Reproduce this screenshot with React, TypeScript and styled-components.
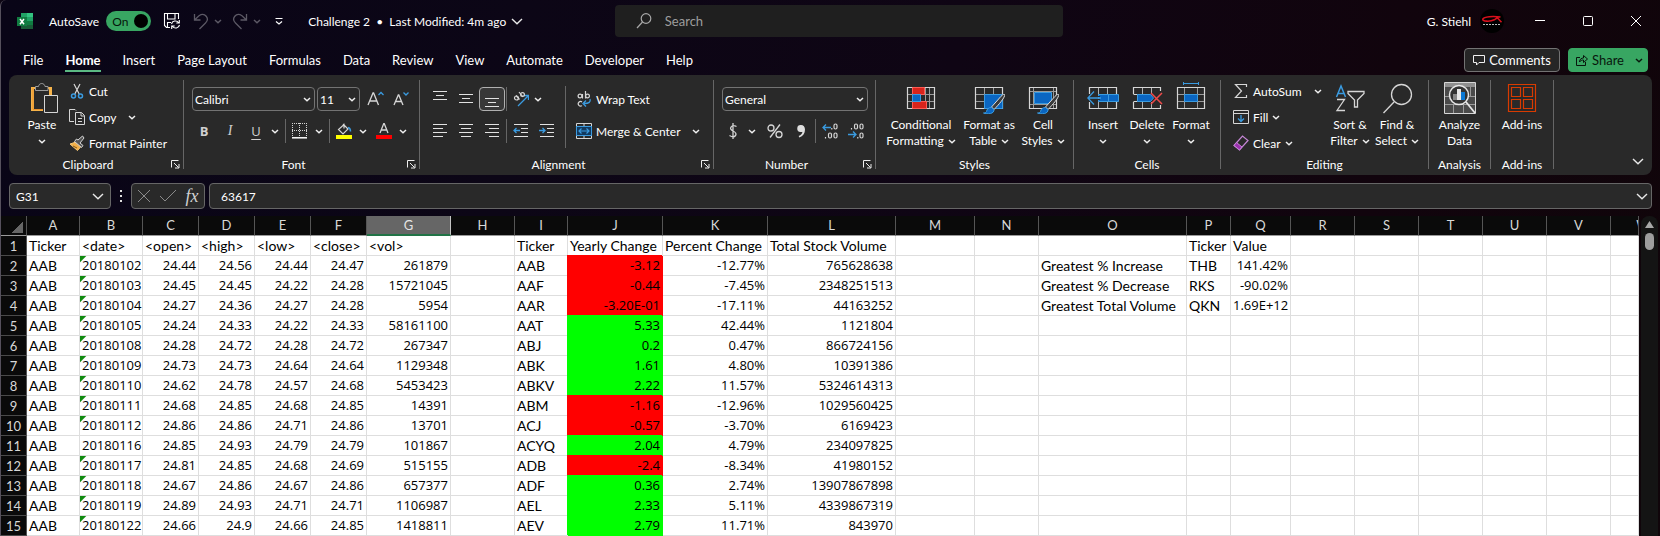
import React from 'react';
import styled, { createGlobalStyle, css } from 'styled-components';

const ink = '#ffffff';
const line = '#d6d6d6';
const blue = '#0a66c2';
const sky = '#3a9be0';
const green = '#38a662';

const Global = createGlobalStyle`
  * { box-sizing: border-box; }
  body { margin: 0; background: #0d0614; overflow-x: hidden; }
  body, button, input, select { font-family: Lato, "Open Sans", sans-serif; font-size: 12px; color: ${ink}; }
  button, input, select { margin: 0; padding: 0; border: 0; background: none; outline: none; }
  svg { display: block; flex: none; }
`;

const Window = styled.div`
  height: 100vh;
  overflow: hidden;
  display: flex;
  flex-direction: column;
  border-left: 1px solid #55505c;
  border-top-left-radius: 6px;
  background: linear-gradient(100deg, #090517 0%, #0c0616 30%, #0f0514 55%, #11040d 80%, #10050a 100%);
`;

/* ---------- Title bar ---------- */
const TitleBar = styled.header`
  display: grid;
  grid-template-columns: 37% 27% 1fr;
  align-items: center;
  height: 42px;
`;
const TitleLeft = styled.div`
  display: flex;
  align-items: center;
  padding-left: 16px;
  white-space: nowrap;
`;
const AutoSave = styled.label`
  display: flex;
  align-items: center;
  gap: 7px;
  margin: 0 12px 0 16px;
`;
const Switch = styled.span`
  display: flex;
  align-items: center;
  justify-content: space-between;
  width: 45px;
  height: 20px;
  padding: 0 3px 0 6px;
  border-radius: 10px;
  background: ${green};
  color: #06140b;
`;
const Knob = styled.span`
  width: 14px;
  height: 14px;
  border-radius: 50%;
  background: #000;
`;
const HiddenCheck = styled.input`
  position: absolute;
  opacity: 0;
  width: 1px;
  height: 1px;
`;
const QuickButton = styled.button<{ $w: number; $ml?: number }>`
  display: flex;
  justify-content: center;
  align-items: center;
  width: ${p => p.$w}px;
  height: 24px;
  margin-left: ${p => p.$ml ?? 0}px;
`;
const DocName = styled.button`
  display: flex;
  align-items: center;
  gap: 5px;
  margin-left: 23px;
  white-space: pre;
`;
const SearchBox = styled.label`
  display: flex;
  align-items: center;
  gap: 13px;
  height: 32px;
  padding-left: 21px;
  border-radius: 4px;
  background: #1f1f1f;
`;
const SearchInput = styled.input`
  flex: 1;
  font-size: 13px;
  &::placeholder { color: #9d9d9d; opacity: 1; }
`;
const TitleRight = styled.div`
  display: flex;
  align-items: center;
  justify-content: flex-end;
`;
const Avatar = styled.span`
  width: 24px;
  height: 24px;
  margin: 0 12px 0 9px;
  border-radius: 50%;
  background: #000;
`;
const WindowButton = styled.button`
  display: flex;
  align-items: center;
  justify-content: center;
  width: 48px;
  height: 32px;
`;

/* ---------- Tabs ---------- */
const TabRow = styled.div`
  display: flex;
  align-items: center;
  justify-content: space-between;
  height: 33px;
  padding: 6px 12px 3px 22px;
`;
const Tabs = styled.nav`
  display: flex;
  gap: 22px;
`;
const Tab = styled.button<{ $active?: boolean }>`
  height: 24px;
  font-size: 13px;
  padding-top: 2px;
  font-weight: ${p => (p.$active ? 700 : 400)};
  border-bottom: 2px solid ${p => (p.$active ? '#5bb983' : 'transparent')};
`;
const TabActions = styled.div`
  display: flex;
  gap: 8px;
`;
const CommentsButton = styled.button`
  display: flex;
  align-items: center;
  justify-content: center;
  gap: 4px;
  width: 96px;
  height: 24px;
  font-size: 13px;
  border: 1px solid #737373;
  border-radius: 4px;
  background: #262626;
`;
const ShareButton = styled(CommentsButton)`
  justify-content: flex-start;
  width: 80px;
  padding: 0 4px 0 7px;
  border-color: ${green};
  background: ${green};
  color: #08170d;
`;
const ShareText = styled.span`
  flex: 1;
  text-align: left;
`;

/* ---------- Ribbon ---------- */
const Ribbon = styled.section`
  display: flex;
  height: 100px;
  margin: 0 8px;
  border-radius: 8px;
  background: #292929;
`;
const Divider = styled.span<{ $m?: string }>`
  flex: none;
  width: 1px;
  margin: ${p => p.$m ?? '0 1px'};
  background: #666;
`;
const Group = styled.section<{ $w: number }>`
  display: flex;
  flex-direction: column;
  flex: none;
  width: ${p => p.$w}px;
  padding-top: 4px;
`;
const GroupBody = styled.div<{ $pl?: number }>`
  display: flex;
  height: 78px;
  padding-left: ${p => p.$pl ?? 0}px;
`;
const GroupFooter = styled.footer`
  display: flex;
  align-items: center;
  height: 15px;
  text-align: center;
`;
const GroupName = styled.span`
  flex: 1;
`;
const Launcher = styled.button`
  display: flex;
  justify-content: center;
  width: 16px;
`;
const BigButton = styled.button<{ $w: number }>`
  display: flex;
  flex-direction: column;
  align-items: center;
  flex: none;
  width: ${p => p.$w}px;
  height: 78px;
  padding-top: 3px;
  line-height: 16px;
  white-space: nowrap;
`;
const BigText = styled.span`
  margin-top: 3px;
`;
const BigLine = styled.span`
  display: flex;
  align-items: center;
  gap: 4px;
  height: 16px;
`;
const Stack = styled.div<{ $w?: number; $pl?: number }>`
  flex: none;
  width: ${p => (p.$w ? p.$w + 'px' : 'auto')};
  padding-left: ${p => p.$pl ?? 0}px;
`;
const StackRow = styled.div<{ $gap?: number }>`
  display: flex;
  align-items: center;
  gap: ${p => p.$gap ?? 4}px;
  height: 26px;
  padding-bottom: 2px;
`;
const TextButton = styled.button`
  display: flex;
  align-items: center;
  gap: 4px;
  height: 24px;
  white-space: nowrap;
`;
const ToolRows = styled.div<{ $w?: number }>`
  display: flex;
  flex-direction: column;
  gap: 8px;
  padding-top: 8px;
  flex: none;
  width: ${p => (p.$w ? p.$w + 'px' : 'auto')};
`;
const ToolRow = styled.div<{ $pl?: number }>`
  display: flex;
  height: 24px;
  padding-left: ${p => p.$pl ?? 0}px;
`;
const glyph = css`
  font-family: "Open Sans", sans-serif;
  color: #d0d0d0;
`;
const Tool = styled.button<{ $on?: boolean; $size?: number }>`
  ${glyph}
  display: flex;
  align-items: center;
  justify-content: center;
  flex: none;
  width: 26px;
  height: 24px;
  font-size: ${p => p.$size ?? 13}px;
  ${p => p.$on && css`
    border: 1px solid #b0b0b0;
    border-radius: 4px;
    background: #383838;
  `}
`;
const Bold = styled.b`font-weight: 700;`;
const Italic = styled.i`font-family: "Liberation Serif", serif; font-size: 14px;`;
const Under = styled.u`text-underline-offset: 3px;`;
const Drop = styled.button<{ $w?: number; $mr?: number }>`
  display: flex;
  align-items: center;
  justify-content: center;
  flex: none;
  width: ${p => p.$w ?? 12}px;
  height: 24px;
  margin-right: ${p => p.$mr ?? 0}px;
`;
const SelectFrame = styled.label<{ $w: number; $mr?: number }>`
  display: flex;
  align-items: center;
  flex: none;
  width: ${p => p.$w}px;
  height: 24px;
  margin-right: ${p => p.$mr ?? 0}px;
  padding: 0 3px 0 2px;
  border: 1px solid #737373;
  border-radius: 4px;
`;
const Select = styled.select`
  flex: 1;
  min-width: 0;
  appearance: none;
`;
const RibbonEnd = styled.div`
  flex: 1;
  display: flex;
  justify-content: flex-end;
  align-items: flex-end;
  padding: 0 8px 10px 0;
`;

/* ---------- Formula bar ---------- */
const FormulaBar = styled.div`
  display: flex;
  flex: none;
  height: 26px;
  margin: 8px 8px 7px;
`;
const Frame = styled.div<{ $w?: number }>`
  display: flex;
  align-items: center;
  flex: ${p => (p.$w ? 'none' : '1')};
  width: ${p => (p.$w ? p.$w + 'px' : 'auto')};
  border: 1px solid #666;
  border-radius: 4px;
  background: #292929;
`;
const FormulaFrame = styled(Frame)`
  margin-left: 4px;
`;
const BarInput = styled.input<{ $pl: number }>`
  flex: 1;
  min-width: 0;
  padding-left: ${p => p.$pl}px;
`;
const Grip = styled.span`
  display: flex;
  align-items: center;
  justify-content: center;
  width: 20px;
`;
const FxTool = styled.button<{ $w?: number }>`
  display: flex;
  align-items: center;
  justify-content: center;
  width: ${p => p.$w ?? 24}px;
`;
const Fx = styled.i`
  font-family: "Liberation Serif", serif;
  font-size: 18px;
  line-height: 20px;
  color: #d0d0d0;
`;

/* ---------- Sheet ---------- */
const SheetArea = styled.main`
  display: flex;
  flex: 1;
  min-height: 0;
  overflow: hidden;
`;
const GridPane = styled.div`
  flex: 1;
  min-width: 0;
  overflow: hidden;
`;
const Grid = styled.table`
  width: 100%;
  table-layout: fixed;
  border-collapse: separate;
  border-spacing: 0;
  background: #fff;
`;
const Col = styled.col<{ $w?: number }>`
  width: ${p => (p.$w ? p.$w + 'px' : 'auto')};
`;
const ColHead = styled.th<{ $sel?: boolean }>`
  height: 20px;
  padding: 0 0 2px;
  overflow: hidden;
  font-size: 13px;
  font-weight: 400;
  line-height: 16px;
  color: #d8d8d8;
  background: #0a0a0a;
  border-right: 1px solid #555;
  border-bottom: 1px solid #9a9a9a;
  ${p => p.$sel && css`
    color: #e4e4e4;
    background: #666;
    padding-bottom: 1px;
    border-right-color: #c4c4c4;
    border-bottom: 2px solid #217346;
  `}
`;
const ClippedHead = styled.div`
  width: 64px;
`;
const Corner = styled(ColHead)`
  background: linear-gradient(135deg, transparent 50%, #666 50%) right 3px bottom 2px / 12px 12px no-repeat #0a0a0a;
`;
const RowHead = styled.th`
  height: 20px;
  padding: 0;
  font-size: 13px;
  font-weight: 400;
  line-height: 18px;
  color: #d8d8d8;
  background: #0a0a0a;
  border-right: 1px solid #555;
  border-bottom: 1px solid #4a4a4a;
`;
const Cell = styled.td<{ $num?: boolean; $left?: boolean; $fill?: string; $flag?: boolean }>`
  height: 20px;
  padding: 0 2px;
  overflow: hidden;
  white-space: nowrap;
  line-height: 19px;
  color: #000;
  font-family: ${p => (p.$num ? '"Open Sans", sans-serif' : 'Lato, "Open Sans", sans-serif')};
  font-size: ${p => (p.$num ? 13 : 14)}px;
  text-align: ${p => (p.$num && !p.$left ? 'right' : 'left')};
  border-right: 1px solid #dedede;
  border-bottom: 1px solid #dedede;
  ${p => p.$flag && css`
    background: linear-gradient(135deg, #0f8a0f 4px, transparent 5px);
  `}
  ${p => p.$fill && css`
    position: relative;
    background: ${p.$fill};
    border-color: ${p.$fill};
    box-shadow: -1px -1px 0 ${p.$fill};
  `}
`;
const ScrollTrack = styled.div`
  display: flex;
  flex-direction: column;
  align-items: center;
  gap: 5px;
  flex: none;
  width: 17px;
  margin: 0 2px;
  padding-top: 5px;
  border-radius: 8px 8px 0 0;
  background: #141414;
`;
const ScrollThumb = styled.span`
  width: 9px;
  height: 17px;
  border-radius: 5px;
  background: #9e9e9e;
`;

/* ---------- Icons ---------- */
const Chev = ({ c = '#f0f0f0' }: { c?: string }) => (
  <svg width="8" height="5" viewBox="0 0 8 5" fill="none" stroke={c} strokeWidth="1.5"><path d="M1 1l3 2.7L7 1" /></svg>
);
const WideChev = () => (
  <svg width="12" height="7" viewBox="0 0 12 7" fill="none" stroke="#e8e8e8" strokeWidth="1.4"><path d="M1 1l5 4.8L11 1" /></svg>
);
const Ico = ({ s = 16, w, children }: { s?: number; w?: number; children: React.ReactNode }) => (
  <svg width={w ?? s} height={s} viewBox={`0 0 ${w ?? s} ${s}`} fill="none" stroke={line} strokeWidth="1">{children}</svg>
);
const ExcelLogo = () => (
  <Ico s={16}>
    <g stroke="none">
      <path fill="#21a366" d="M4 0h6v4H4z" /><path fill="#33c481" d="M10 0h6v4h-6z" />
      <path fill="#107c41" d="M4 4h6v4H4z" /><path fill="#21a366" d="M10 4h6v4h-6z" />
      <path fill="#185c37" d="M4 8h6v8H4z" /><path fill="#107c41" d="M10 8h6v4h-6z" /><path fill="#185c37" d="M10 12h6v4h-6z" />
      <path fill="#107c41" d="M0 4h10v9H0z" />
    </g>
    <path stroke="#fff" strokeWidth="1.5" d="M3 6l4 5.2M7 6l-4 5.2" />
  </Ico>
);
const SaveIcon = () => (
  <Ico s={18}><g stroke="#fff" strokeWidth="1.1">
    <path d="M7 15.5H3.5l-2-2v-12h14V7M4.500 1.500v5.500h7.500V1.500M4.500 15v-4.500H8" />
    <path d="M8.500 12a4 4 0 0 1 7-1.500m.800-2.500v3h-3M16.500 13a4 4 0 0 1-7 1.500m-.8 2.500v-3h3" />
  </g></Ico>
);
const UndoIcon = () => <Ico s={17} w={16}><path stroke="#5c5965" strokeWidth="1.3" d="M1.500 1v6h6M1.500 7L6 2.700c6-4 11 3 6.500 7.300L6.500 16" /></Ico>;
const RedoIcon = () => <Ico s={17} w={16}><path stroke="#5c5965" strokeWidth="1.3" d="M14.500 1v6h-6M14.500 7L10 2.700C4 -1.300 -1 5.700 3.500 10L9.500 16" /></Ico>;
const Launch = () => (
  <Ico s={9}><path stroke="#eee" d="M.5 7.500V.5h7M3 3l4.500 4.500M8 4v4H4" /></Ico>
);
const PasteIcon = () => (
  <Ico s={32}>
    <path fill="#f7b44a" stroke="none" d="M5 5h6v2H8v20h9v2H5z" /><path fill="#f7b44a" stroke="none" d="M20 5h6v8h-3V7h-3z" />
    <path stroke="#e8912d" d="M7 6v21.500h10" />
    <path fill="#292929" d="M9.500 8.500v-4h3c.5-4 6-4 6.500 0h3v4z" stroke="#9c9c9c" />
    <path d="M18.500 13.500h13v17h-13z" fill="#292929" />
  </Ico>
);
const CutIcon = () => (
  <Ico><path d="M5 1l5.200 10M11 1L5.800 11" strokeWidth="1.200" /><g stroke={sky} strokeWidth="1.500"><circle cx="4.500" cy="13" r="2" /><circle cx="11.500" cy="13" r="2" /></g></Ico>
);
const CopyIcon = () => (
  <Ico><path d="M5 12.500H.5v-12H6l1 1M6.500 3.500h6l3 3v9h-9zM12 3.500V7h3.500M9 9.500h4M9 12.500h4" /></Ico>
);
const PainterIcon = () => (
  <Ico><path fill="#f2b04a" stroke="#f7c877" d="M1 9l6-2 5 4.500-3.500 4z" /><path stroke="#8a5a12" d="M4 11l4 2" /><path d="M5.500 6.500l7 6 1.500-2-3-2.500L15 3l-1.500-2-4.500 4-1.500-1z" fill="#555" /></Ico>
);
const GrowA = () => <Ico s={20}><path strokeWidth="1.300" d="M3 16L8 4h.6L13.500 16M4.800 12h7" /><path stroke={sky} strokeWidth="1.300" d="M13.500 6L16 3.500 18.500 6" /></Ico>;
const ShrinkA = () => <Ico s={20}><path strokeWidth="1.300" d="M3 16l4.300-10h.5L12 16M4.500 12.500h6" /><path stroke={sky} strokeWidth="1.300" d="M12.500 3.500L15 6l2.500-2.500" /></Ico>;
const BordersIcon = () => <Ico><path strokeDasharray="1 1" d="M0 .5h15M0 7.500h15M.5 0v14M7.500 0v14M14.500 0v14" /><path stroke="#fff" strokeWidth="1.500" d="M0 14.800h15" /></Ico>;
const FillIcon = () => <Ico><path d="M7 1l5 5-5 5-4.500-4.500L8 1.500v4" strokeWidth="1.200" /><path stroke={sky} strokeWidth="1.500" d="M12 4.500c2 .5 2.500 2 2.500 4" /><path fill="#ff0" stroke="none" d="M0 12h16v4H0z" /></Ico>;
const FontColorIcon = () => <Ico><path strokeWidth="1.300" d="M4 10L8 0l4 10M5.300 7h5.400" /><path fill="#f00" stroke="none" d="M0 12h16v4H0z" /></Ico>;
const Lines = ({ rows }: { rows: [number, number, number][] }) => (
  <Ico><g stroke="#e2e2e2">{rows.map(([y, a, b]) => <path key={y} d={`M${a} ${y + 0.5}H${b}`} />)}</g></Ico>
);
const OrientIcon = () => (
  <Ico><path stroke={sky} strokeWidth="1.300" d="M5 15L15 5M11 4.500h4.500V9" /><g strokeWidth="1.200"><circle cx="3.500" cy="7" r="2" /><path d="M3 4.500l3.500 4M6 1l4 5" /><circle cx="9.500" cy="3.500" r="1.900" /></g></Ico>
);
const IndentIcon = ({ right }: { right?: boolean }) => (
  <Ico><g stroke="#e2e2e2"><path d="M1 1.500h14M8 5.500h7M8 9.500h7M1 13.500h14" /></g><path stroke={sky} strokeWidth="1.300" d={right ? 'M0 7.500h6M3.500 5l2.500 2.500L3.500 10' : 'M7 7.500H1M3.500 5L1 7.500 3.500 10'} /></Ico>
);
const WrapIcon = () => (
  <Ico><g strokeWidth="1.200"><circle cx="4" cy="5" r="1.900" /><path d="M6.500 3v4.500M9.500 0v7.500M6 11a2.300 2.300 0 1 0 0 3.600" /><circle cx="11.500" cy="5" r="1.900" /></g><path stroke={sky} strokeWidth="1.300" d="M14 8c1 3-1 4.500-6 4.500M10 9.500l-3 3 3 3" /></Ico>
);
const MergeIcon = () => (
  <Ico><path d="M.5 .5h15v15H.5zM8 0v3M8 13v3" /><path fill="#12395e" stroke={sky} d="M.5 3.500h15v9H.5z" /><path stroke={sky} strokeWidth="1.200" d="M3 8h10M5.500 5.500L3 8l2.500 2.500M10.500 5.500L13 8l-2.500 2.500" /></Ico>
);
const DollarIcon = () => <Ico s={20}><path strokeWidth="1.300" d="M13.500 5.500c-5-2.500-8.500 2.500-3.500 4.500 6 2.500 2 8-3.500 4.500M10 2v16" /></Ico>;
const PercentIcon = () => <Ico s={20}><g strokeWidth="1.300"><circle cx="6" cy="7" r="3" /><circle cx="14" cy="13.500" r="3" /><path d="M15 3.500L5 16.500" /></g></Ico>;
const CommaIcon = () => <Ico s={20}><path fill="#dedede" stroke="none" d="M10 4a3.500 3.500 0 0 0-.5 7c1.300.2 2-.2 2-.2-.3 2-1.500 3.300-3.800 4.200l.6 1.500C12 15 14 12.500 14 8.500 14 6 12.500 4 10 4z" /></Ico>;
const DecimalIcon = ({ more }: { more?: boolean }) => (
  <Ico>
    <path stroke={sky} strokeWidth="1.300" d={more ? 'M9 4.500H1M4 1.500l-3 3 3 3' : 'M0 11.500h8M5 8.500l3 3-3 3'} />
    <g strokeWidth="1.200">{more
      ? <><rect x="12" y="1" width="3" height="5" rx="1.500" /><rect x="6.500" y="10" width="3" height="5" rx="1.500" /><rect x="12" y="10" width="3" height="5" rx="1.500" /><path d="M3.500 14v1.500M9.800 5v1.500" /></>
      : <><rect x="6.500" y="1" width="3" height="5" rx="1.500" /><rect x="12" y="1" width="3" height="5" rx="1.500" /><rect x="12" y="10" width="3" height="5" rx="1.500" /><path d="M3.500 5v1.500M9.800 14v1.500" /></>}</g>
  </Ico>
);
const CondIcon = () => (
  <Ico s={32}>
    <path stroke="#9a9a9a" d="M2 12.500h28M2 19.500h28M7.500 5v22M20.500 5v22M24.500 5v22" /><path strokeWidth="1.200" d="M2.500 5.500h27v21h-27z" />
    <path fill="#d8241c" stroke="#ff5a52" d="M7.500 5.500h12v7h-12zM7.500 19.500h14v7h-14z" /><path fill={blue} stroke={sky} d="M7.500 12.500h8v7h-8z" />
  </Ico>
);
const Brush = () => (
  <><path fill="#3b3b3b" stroke="#dcdcdc" d="M31.500 12.500c-1-.6-3 1-5 3.500L18.500 25l2.500 2.500c4-4 12-13 10.500-15z" /><path fill={blue} stroke={sky} d="M18.500 25.500c-3 0-4.500 1.500-5 4-.5 1.500-2 1.500-3 1.500 4 1.500 11 1 10.500-3.500z" /></>
);
const FormatTableIcon = () => (
  <Ico s={32}><path stroke="#9a9a9a" d="M2 12.500h27M2 19.500h27M11.500 5v22M20.500 5v22" /><path strokeWidth="1.200" d="M2.500 5.500h27v21h-27z" /><path fill={blue} stroke={sky} d="M11.500 12.500h18v14h-18z" /><Brush /></Ico>
);
const CellStylesIcon = () => (
  <Ico s={32}><path stroke="#9a9a9a" d="M2 9.500h28M2 22.500h28M6.500 5v22M26.500 5v22" /><path strokeWidth="1.200" d="M2.500 5.500h27v21h-27z" /><path fill={blue} stroke={sky} d="M7.500 10.500h17v11h-17z" /><Brush /></Ico>
);
const InsertIcon = () => (
  <Ico s={32}><path stroke="#b0b0b0" d="M11.500 5v22M20.500 5v22" /><path strokeWidth="1.200" d="M2.500 12V5.500h27V12M2.500 20v6.500h27V20" /><path fill={blue} stroke={sky} d="M11.500 12.500h20v7h-20zM21.500 12.500v7" /><path fill="#292929" stroke={sky} strokeWidth="1.300" d="M7 9.500L.8 16 7 22.500M1 16h13" /><path stroke="#292929" d="M4 14.500h9M4 17.500h9" /></Ico>
);
const DeleteIcon = () => (
  <Ico s={32}><path stroke="#b0b0b0" d="M11.500 5v7M20.500 5v7M11.500 20v7M20.500 20v7" /><path strokeWidth="1.200" d="M2.500 12V5.500h27V9M2.500 20v6.500h27V23M2.500 12.500h4M2.500 19.500h4" /><path fill={blue} stroke={sky} d="M6.500 12.500h13l3 3.500-3 3.500h-13z" /><path stroke="#f04a4a" strokeWidth="1.500" d="M20 11l11 11M31 11L20 22" /></Ico>
);
const FormatIcon = () => (
  <Ico s={32}><path stroke={sky} d="M8.500 0v3M23.500 0v3M8 1.500h16" /><path stroke="#9a9a9a" d="M2 12.500h27M2 19.500h27M9.500 5v22M22.500 5v22" /><path strokeWidth="1.200" d="M2.500 5.500h27v21h-27z" /><path fill={blue} stroke={sky} d="M9.500 12.500h13v7h-13z" /></Ico>
);
const SumIcon = () => <Ico><path strokeWidth="1.200" d="M13.500 4V1.500h-11L8.500 8l-6 6.500h11V12" /></Ico>;
const FillDownIcon = () => <Ico><path d="M.5 1.500h15v13H.5zM.5 4.500h15" /><path stroke={sky} strokeWidth="1.300" d="M8 6v6.500M5 9.500l3 3 3-3" /></Ico>;
const ClearIcon = () => <Ico><path stroke="#c586d6" strokeWidth="1.200" d="M1 10.500L9.500 1 15 5.500 6.500 15z" /><path fill="#9b2fae" stroke="#c586d6" d="M1 10.500l2.500-3L9 12l-2.500 3z" /></Ico>;
const SortIcon = () => (
  <Ico s={32}><path stroke={sky} strokeWidth="1.500" d="M2.500 15L7 4l4.500 11M4 11.500h6" /><path strokeWidth="1.300" d="M3 17.500h7.500L3 28.500h8" /><path strokeWidth="1.300" d="M14 9.500h16v2l-6.500 6.500v7h-3v-7L14 11.500z" /></Ico>
);
const FindIcon = () => <Ico s={32}><circle cx="20.500" cy="12.500" r="10" strokeWidth="1.300" /><path strokeWidth="1.300" d="M13 20L2.500 31" /></Ico>;
const AnalyzeIcon = () => (
  <Ico s={32}>
    <path fill="#4a4a4a" d="M.5 .5h31v31H.5z" /><path fill="#8f8f8f" stroke="none" d="M1 1h30v4H1z" /><path stroke="#9a9a9a" d="M1 14.500h30M1 22.500h30M9.500 22v9M19.500 22v9M26.500 5v9" />
    <circle cx="15" cy="13" r="9.500" fill="#333" stroke="#e8e8e8" strokeWidth="1.500" /><path strokeWidth="1.800" stroke="#e8e8e8" d="M22 20l9 11" />
    <g stroke="none"><path fill="#888" d="M9 12h4v6H9z" /><path fill="#e8e8e8" d="M13 7h4v11h-4z" /><path fill="#0a78d4" d="M17 10h4v8h-4z" /></g>
  </Ico>
);
const AddinsIcon = () => <Ico s={32}><g stroke="#d83b01" strokeWidth="1.200"><path d="M2.500 2.500h27v27h-27z" /><path d="M5.500 5.500h9v9h-9zM17.500 5.500h9v9h-9zM5.500 17.500h9v9h-9zM17.500 17.500h9v9h-9z" /></g></Ico>;

/* ---------- Data ---------- */
const tabs = ['File', 'Home', 'Insert', 'Page Layout', 'Formulas', 'Data', 'Review', 'View', 'Automate', 'Developer', 'Help'];

const columns: [string, number?][] = [
  ['A', 53], ['B', 63], ['C', 56], ['D', 56], ['E', 56], ['F', 56], ['G', 84], ['H', 64], ['I', 53], ['J', 95], ['K', 105],
  ['L', 128], ['M', 79], ['N', 64], ['O', 148], ['P', 44], ['Q', 60], ['R', 64], ['S', 64], ['T', 64], ['U', 64], ['V', 64], ['W'],
];

const prices = [
  ['20180102', '24.44', '24.56', '24.44', '24.47', '261879'],
  ['20180103', '24.45', '24.45', '24.22', '24.28', '15721045'],
  ['20180104', '24.27', '24.36', '24.27', '24.28', '5954'],
  ['20180105', '24.24', '24.33', '24.22', '24.33', '58161100'],
  ['20180108', '24.28', '24.72', '24.28', '24.72', '267347'],
  ['20180109', '24.73', '24.73', '24.64', '24.64', '1129348'],
  ['20180110', '24.62', '24.78', '24.57', '24.68', '5453423'],
  ['20180111', '24.68', '24.85', '24.68', '24.85', '14391'],
  ['20180112', '24.86', '24.86', '24.71', '24.86', '13701'],
  ['20180116', '24.85', '24.93', '24.79', '24.79', '101867'],
  ['20180117', '24.81', '24.85', '24.68', '24.69', '515155'],
  ['20180118', '24.67', '24.86', '24.67', '24.86', '657377'],
  ['20180119', '24.89', '24.93', '24.71', '24.71', '1106987'],
  ['20180122', '24.66', '24.9', '24.66', '24.85', '1418811'],
];
const summary = [
  ['AAB', '-3.12', '-12.77%', '765628638'],
  ['AAF', '-0.44', '-7.45%', '2348251513'],
  ['AAR', '-3.20E-01', '-17.11%', '44163252'],
  ['AAT', '5.33', '42.44%', '1121804'],
  ['ABJ', '0.2', '0.47%', '866724156'],
  ['ABK', '1.61', '4.80%', '10391386'],
  ['ABKV', '2.22', '11.57%', '5324614313'],
  ['ABM', '-1.16', '-12.96%', '1029560425'],
  ['ACJ', '-0.57', '-3.70%', '6169423'],
  ['ACYQ', '2.04', '4.79%', '234097825'],
  ['ADB', '-2.4', '-8.34%', '41980152'],
  ['ADF', '0.36', '2.74%', '13907867898'],
  ['AEL', '2.33', '5.11%', '4339867319'],
  ['AEV', '2.79', '11.71%', '843970'],
];
const greatest = [
  ['Greatest % Increase', 'THB', '141.42%'],
  ['Greatest % Decrease', 'RKS', '-90.02%'],
  ['Greatest Total Volume', 'QKN', '1.69E+12'],
];
const headings = ['Ticker', '<date>', '<open>', '<high>', '<low>', '<close>', '<vol>', '', 'Ticker', 'Yearly Change', 'Percent Change', 'Total Stock Volume', '', '', '', 'Ticker', 'Value'];
const pad = (r: string[]) => [...r, ...Array(columns.length - r.length).fill('')] as string[];
const rows: string[][] = [
  pad(headings),
  ...prices.map((p, i) => pad(['AAB', ...p, '', ...summary[i], '', '', ...(greatest[i] ?? [])])),
];
const numeric = [1, 2, 3, 4, 5, 6, 9, 10, 11, 16];

/* ---------- Parts ---------- */
const Big = ({ w, icon, top, bottom, drop }: { w: number; icon: React.ReactNode; top: string; bottom?: string; drop?: boolean }) => (
  <BigButton $w={w}>
    {icon}
    <BigText>{top}</BigText>
    <BigLine>{bottom}{drop && <Chev />}</BigLine>
  </BigButton>
);
const Footer = ({ name, launch }: { name: string; launch?: boolean }) => (
  <GroupFooter>
    <GroupName>{name}</GroupName>
    {launch && <Launcher aria-label={`${name} settings`}><Launch /></Launcher>}
  </GroupFooter>
);
const Sep = () => <Divider $m="5px 0 6px" />;
const Picker = ({ label, value, w, mr }: { label: string; value: string; w: number; mr?: number }) => (
  <SelectFrame $w={w} $mr={mr}>
    <Select aria-label={label} defaultValue={value}><option>{value}</option></Select>
    <Chev />
  </SelectFrame>
);

const TitleSection = () => (
  <TitleBar>
    <TitleLeft>
      <ExcelLogo />
      <AutoSave>
        AutoSave
        <HiddenCheck type="checkbox" defaultChecked />
        <Switch>On<Knob /></Switch>
      </AutoSave>
      <QuickButton $w={18} aria-label="Save"><SaveIcon /></QuickButton>
      <QuickButton $w={16} $ml={12} aria-label="Undo"><UndoIcon /></QuickButton>
      <QuickButton $w={12} $ml={3} aria-label="Undo list"><Chev c="#5c5965" /></QuickButton>
      <QuickButton $w={16} $ml={8} aria-label="Redo"><RedoIcon /></QuickButton>
      <QuickButton $w={12} $ml={3} aria-label="Redo list"><Chev c="#5c5965" /></QuickButton>
      <QuickButton $w={12} $ml={10} aria-label="Customize toolbar">
        <Ico s={8}><path stroke="#fff" d="M.5 1.500h7M1 4.500l3 2.500 3-2.500" strokeWidth="1.200" /></Ico>
      </QuickButton>
      <DocName>{'Challenge 2  •  Last Modified: 4m ago'}<WideChev /></DocName>
    </TitleLeft>
    <SearchBox>
      <Ico><g stroke="#a8a8a8" strokeWidth="1.200"><circle cx="10" cy="5.500" r="4.800" /><path d="M6.500 9L1 15" /></g></Ico>
      <SearchInput placeholder="Search" aria-label="Search" />
    </SearchBox>
    <TitleRight>
      G. Stiehl
      <Avatar>
        <Ico s={24}><path fill="none" stroke="#d8101c" strokeWidth="1.600" d="M20.500 8C13 7 4 7.500 2.800 10c-.8 2.500 7 3 11.500.8l3-2 4.200 4.400" /><path stroke="#bbb" strokeDasharray="2 1" d="M3 15.500h18" /></Ico>
      </Avatar>
      <WindowButton aria-label="Minimize"><Ico s={10}><path stroke="#fff" d="M0 4.500h10" /></Ico></WindowButton>
      <WindowButton aria-label="Maximize"><Ico s={10}><rect x=".5" y=".5" width="9" height="9" rx="1" stroke="#fff" /></Ico></WindowButton>
      <WindowButton aria-label="Close"><Ico s={10}><path stroke="#fff" d="M0 0l10 10M10 0L0 10" /></Ico></WindowButton>
    </TitleRight>
  </TitleBar>
);

const TabSection = () => (
  <TabRow>
    <Tabs>{tabs.map(t => <Tab key={t} $active={t === 'Home'}>{t}</Tab>)}</Tabs>
    <TabActions>
      <CommentsButton><Ico s={12}><path stroke="#f0f0f0" d="M.5 1.500h11v7H6L3.500 11V8.500h-3z" /></Ico>Comments</CommentsButton>
      <ShareButton>
        <Ico s={12}><path stroke="#08170d" d="M4 3.500H.5v8h9V8M3.500 8c0-3 2-4 4-4V1.500L11.500 5 7.500 8.500V6c-2 0-3 .5-4 2z" /></Ico>
        <ShareText>Share</ShareText>
        <Chev c="#08170d" />
      </ShareButton>
    </TabActions>
  </TabRow>
);

const RibbonSection = () => (
  <Ribbon>
    <Group $w={174}>
      <GroupBody $pl={11}>
        <Big w={44} icon={<PasteIcon />} top="Paste" drop />
        <Stack $pl={5}>
          <StackRow><TextButton><CutIcon />Cut</TextButton></StackRow>
          <StackRow $gap={10}><TextButton><CopyIcon />Copy</TextButton><Drop aria-label="Copy options"><Chev /></Drop></StackRow>
          <StackRow><TextButton><PainterIcon />Format Painter</TextButton></StackRow>
        </Stack>
      </GroupBody>
      <Footer name="Clipboard" launch />
    </Group>
    <Sep />
    <Group $w={235}>
      <GroupBody>
        <ToolRows>
          <ToolRow $pl={8}>
            <Picker label="Font" value="Calibri" w={123} mr={2} />
            <Picker label="Font size" value="11" w={43} mr={2} />
            <Tool aria-label="Increase font size"><GrowA /></Tool>
            <Tool aria-label="Decrease font size"><ShrinkA /></Tool>
          </ToolRow>
          <ToolRow $pl={7}>
            <Tool><Bold>B</Bold></Tool>
            <Tool><Italic>I</Italic></Tool>
            <Tool><Under>U</Under></Tool>
            <Drop aria-label="Underline options"><Chev /></Drop>
            <Divider $m="0 1px 0 4px" />
            <Tool aria-label="Borders"><BordersIcon /></Tool>
            <Drop aria-label="Border options"><Chev /></Drop>
            <Divider $m="0 1px 0 4px" />
            <Tool aria-label="Fill color"><FillIcon /></Tool>
            <Drop $mr={2} aria-label="Fill options"><Chev /></Drop>
            <Tool aria-label="Font color"><FontColorIcon /></Tool>
            <Drop aria-label="Font color options"><Chev /></Drop>
          </ToolRow>
        </ToolRows>
      </GroupBody>
      <Footer name="Font" launch />
    </Group>
    <Sep />
    <Group $w={293}>
      <GroupBody $pl={7}>
        <ToolRows $w={138}>
          <ToolRow>
            <Tool aria-label="Top align"><Lines rows={[[0, 1, 15], [4, 4, 12], [8, 1, 15]]} /></Tool>
            <Tool aria-label="Middle align"><Lines rows={[[3, 1, 15], [7, 4, 12], [11, 1, 15]]} /></Tool>
            <Tool $on aria-label="Bottom align"><Lines rows={[[7, 1, 15], [11, 4, 12], [15, 1, 15]]} /></Tool>
            <Divider />
            <Tool aria-label="Orientation"><OrientIcon /></Tool>
            <Drop $w={8} aria-label="Orientation options"><Chev /></Drop>
          </ToolRow>
          <ToolRow>
            <Tool aria-label="Align left"><Lines rows={[[1, 1, 15], [5, 1, 11], [9, 1, 15], [13, 1, 11]]} /></Tool>
            <Tool aria-label="Center"><Lines rows={[[1, 1, 15], [5, 3, 13], [9, 1, 15], [13, 3, 13]]} /></Tool>
            <Tool aria-label="Align right"><Lines rows={[[1, 1, 15], [5, 5, 15], [9, 1, 15], [13, 5, 15]]} /></Tool>
            <Divider />
            <Tool aria-label="Decrease indent"><IndentIcon /></Tool>
            <Tool aria-label="Increase indent"><IndentIcon right /></Tool>
          </ToolRow>
        </ToolRows>
        <Divider $m="7px 10px 9px 0" />
        <ToolRows>
          <ToolRow><TextButton><WrapIcon />Wrap Text</TextButton></ToolRow>
          <ToolRow>
            <TextButton><MergeIcon />Merge &amp; Center</TextButton>
            <Drop $w={30} aria-label="Merge options"><Chev /></Drop>
          </ToolRow>
        </ToolRows>
      </GroupBody>
      <Footer name="Alignment" launch />
    </Group>
    <Sep />
    <Group $w={161}>
      <GroupBody $pl={6}>
        <ToolRows>
          <ToolRow $pl={2}><Picker label="Number format" value="General" w={146} /></ToolRow>
          <ToolRow>
            <Tool aria-label="Currency"><DollarIcon /></Tool>
            <Drop $mr={4} aria-label="Currency options"><Chev /></Drop>
            <Tool aria-label="Percent"><PercentIcon /></Tool>
            <Tool aria-label="Comma style"><CommaIcon /></Tool>
            <Divider />
            <Tool aria-label="Increase decimal"><DecimalIcon more /></Tool>
            <Tool aria-label="Decrease decimal"><DecimalIcon /></Tool>
          </ToolRow>
        </ToolRows>
      </GroupBody>
      <Footer name="Number" launch />
    </Group>
    <Sep />
    <Group $w={197}>
      <GroupBody $pl={9}>
        <Big w={72} icon={<CondIcon />} top="Conditional" bottom="Formatting" drop />
        <Big w={64} icon={<FormatTableIcon />} top="Format as" bottom="Table" drop />
        <Big w={44} icon={<CellStylesIcon />} top="Cell" bottom="Styles" drop />
      </GroupBody>
      <Footer name="Styles" />
    </Group>
    <Sep />
    <Group $w={146}>
      <GroupBody $pl={7}>
        <Big w={44} icon={<InsertIcon />} top="Insert" drop />
        <Big w={44} icon={<DeleteIcon />} top="Delete" drop />
        <Big w={44} icon={<FormatIcon />} top="Format" drop />
      </GroupBody>
      <Footer name="Cells" />
    </Group>
    <Sep />
    <Group $w={207}>
      <GroupBody $pl={12}>
        <Stack $w={95}>
          <StackRow $gap={10}><TextButton><SumIcon />AutoSum</TextButton><Drop aria-label="AutoSum options"><Chev /></Drop></StackRow>
          <StackRow><TextButton><FillDownIcon />Fill<Chev /></TextButton></StackRow>
          <StackRow><TextButton><ClearIcon />Clear<Chev /></TextButton></StackRow>
        </Stack>
        <Big w={44} icon={<SortIcon />} top="Sort &amp;" bottom="Filter" drop />
        <Big w={50} icon={<FindIcon />} top="Find &amp;" bottom="Select" drop />
      </GroupBody>
      <Footer name="Editing" />
    </Group>
    <Sep />
    <Group $w={61}>
      <GroupBody><Big w={61} icon={<AnalyzeIcon />} top="Analyze" bottom="Data" /></GroupBody>
      <Footer name="Analysis" />
    </Group>
    <Sep />
    <Group $w={62}>
      <GroupBody><Big w={62} icon={<AddinsIcon />} top="Add-ins" /></GroupBody>
      <Footer name="Add-ins" />
    </Group>
    <Sep />
    <RibbonEnd><button aria-label="Ribbon display options"><WideChev /></button></RibbonEnd>
  </Ribbon>
);

const FormulaSection = () => (
  <FormulaBar>
    <Frame $w={102}>
      <BarInput $pl={6} defaultValue="G31" aria-label="Name box" />
      <FxTool aria-label="Name list"><WideChev /></FxTool>
    </Frame>
    <Grip><Ico w={3} s={12}><path strokeWidth="2" stroke="#ddd" d="M1 0v2M1 5v2M1 10v2" /></Ico></Grip>
    <Frame $w={74}>
      <FxTool aria-label="Cancel"><Ico s={12}><path stroke="#8a8a8a" d="M0 0l12 12M12 0L0 12" /></Ico></FxTool>
      <FxTool aria-label="Enter"><Ico w={16} s={12}><path stroke="#8a8a8a" d="M0 6l5 5L16 0" /></Ico></FxTool>
      <FxTool aria-label="Insert function"><Fx>fx</Fx></FxTool>
    </Frame>
    <FormulaFrame>
      <BarInput $pl={11} defaultValue="63617" aria-label="Formula" />
      <FxTool $w={18} aria-label="Expand formula bar"><WideChev /></FxTool>
    </FormulaFrame>
  </FormulaBar>
);

const SheetSection = () => (
  <SheetArea>
    <GridPane>
      <Grid>
        <colgroup>
          <Col $w={26} />
          {columns.map(([name, w]) => <Col key={name} $w={w} />)}
        </colgroup>
        <thead>
          <tr>
            <Corner aria-label="Select all" />
            {columns.map(([name, w]) => (
              <ColHead key={name} $sel={name === 'G'}>{w ? name : <ClippedHead>{name}</ClippedHead>}</ColHead>
            ))}
          </tr>
        </thead>
        <tbody>
          {rows.map((row, r) => (
            <tr key={r}>
              <RowHead>{r + 1}</RowHead>
              {row.map((v, c) => (
                <Cell
                  key={c}
                  $num={r > 0 && numeric.includes(c)}
                  $left={c === 1}
                  $flag={c === 1 && r > 0 && r !== 10}
                  $fill={c === 9 && r > 0 ? (v.startsWith('-') ? '#ff0000' : '#00ff00') : undefined}
                >
                  {v}
                </Cell>
              ))}
            </tr>
          ))}
        </tbody>
      </Grid>
    </GridPane>
    <ScrollTrack>
      <Ico w={9} s={7}><path fill="#a8a8a8" stroke="none" d="M4.500 0L9 7H0z" /></Ico>
      <ScrollThumb />
    </ScrollTrack>
  </SheetArea>
);

export default function App() {
  return (
    <>
      <Global />
      <Window>
        <TitleSection />
        <TabSection />
        <RibbonSection />
        <FormulaSection />
        <SheetSection />
      </Window>
    </>
  );
}
